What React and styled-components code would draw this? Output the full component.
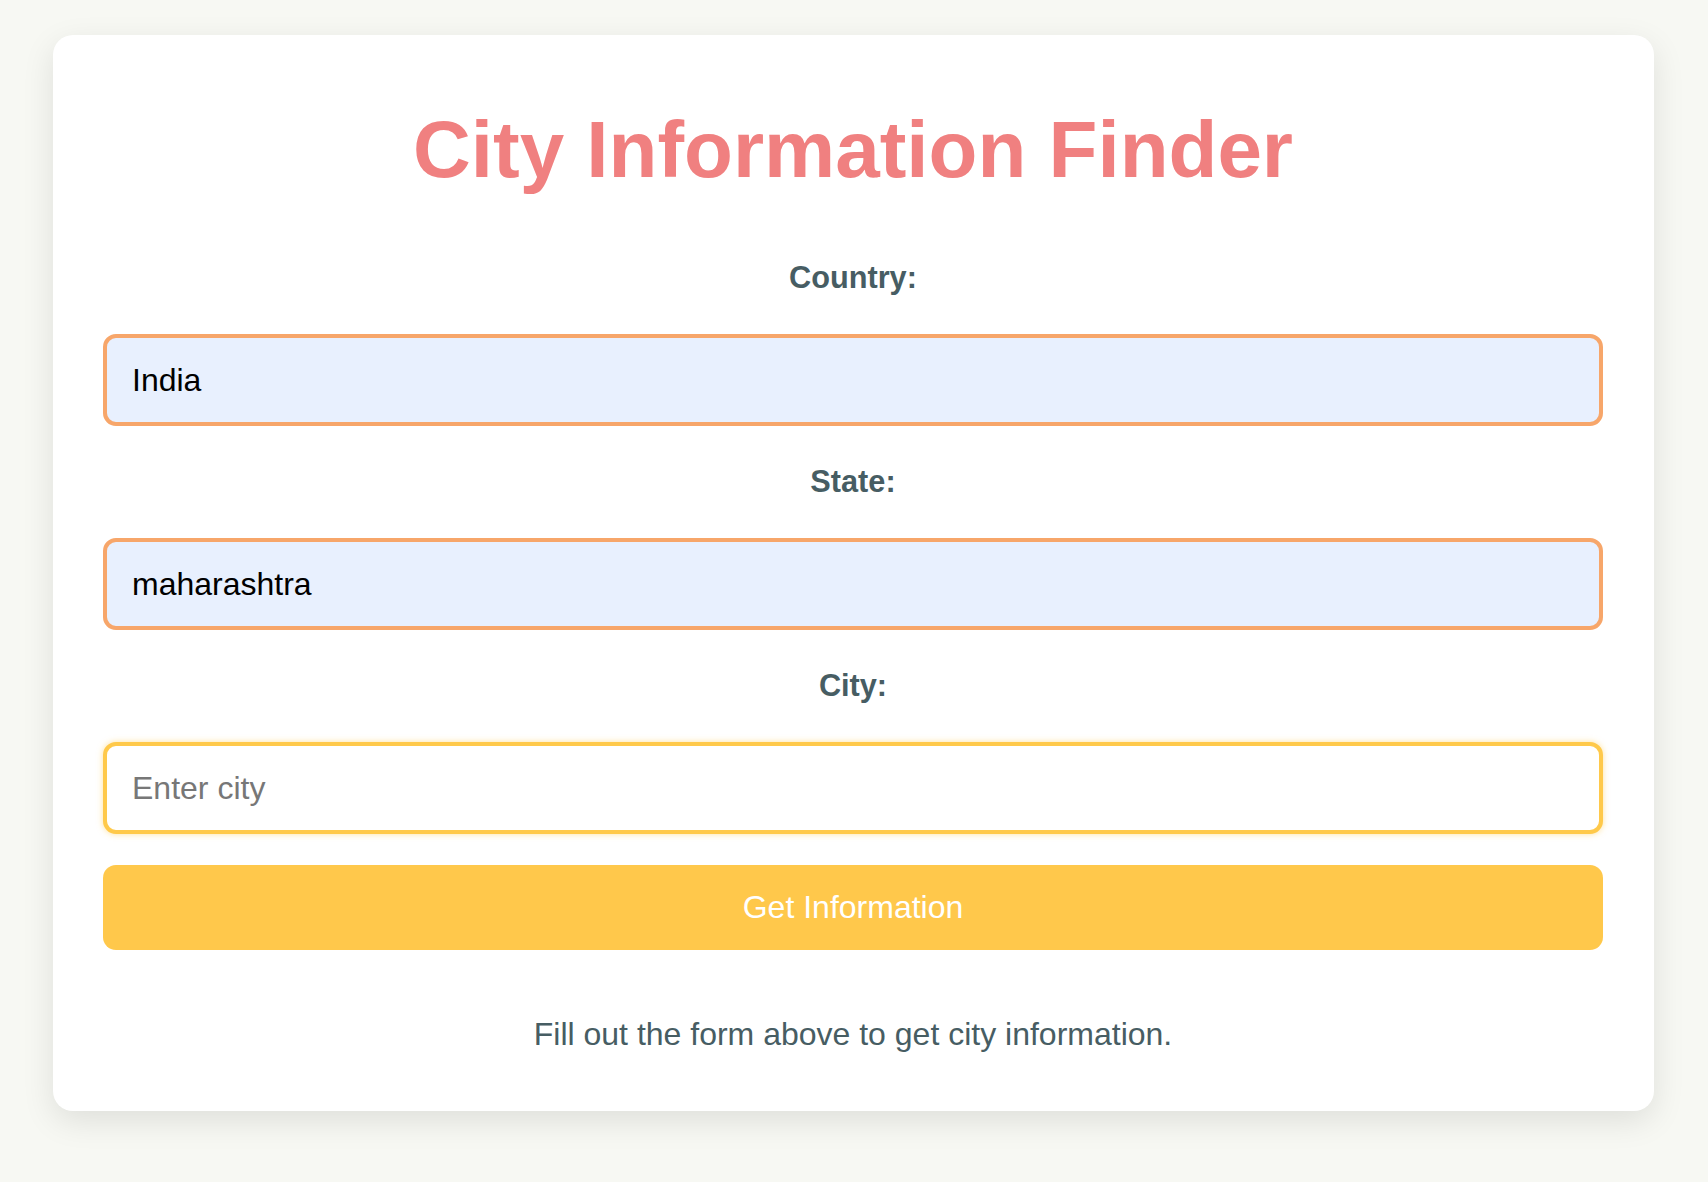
import React, { useState, useRef, useEffect } from "react";
import styled, { createGlobalStyle } from "styled-components";

const GlobalStyle = createGlobalStyle`
  html, body {
    margin: 0;
    padding: 0;
    background: #f7f8f3;
    font-family: "Liberation Sans", Arial, sans-serif;
  }
  * { box-sizing: border-box; }
`;

const Page = styled.div`
  padding: 35px 54px 70px 53px;
`;

const Card = styled.main`
  background: #ffffff;
  border-radius: 20px;
  box-shadow: 0 10px 32px rgba(0, 0, 0, 0.1);
  padding: 69px 51px 58px 50px;
  display: flex;
  flex-direction: column;
`;

const Title = styled.h1`
  margin: 0 0 64px;
  text-align: center;
  font-size: 80px;
  font-weight: 700;
  line-height: 92px;
  color: #f08080;
`;

const Label = styled.label`
  display: block;
  text-align: center;
  font-size: 30.7px;
  font-weight: 700;
  line-height: 35px;
  color: #475d63;
  margin: 0 0 39px;
`;

const Input = styled.input`
  display: block;
  width: 100%;
  height: 92px;
  padding: 0 25px;
  font-family: "Liberation Sans", Arial, sans-serif;
  font-size: 32px;
  color: #000;
  border: 4px solid ${(p) => (p.$focused ? "#ffc94a" : "#f7a66a")};
  border-radius: 13px;
  background: ${(p) => (p.$filled ? "#e8f0fe" : "#ffffff")};
  margin: 0 0 ${(p) => p.$gap}px;
  outline: none;
  box-shadow: ${(p) => (p.$focused ? "0 0 6px rgba(255, 201, 74, 0.55)" : "none")};
  &::placeholder {
    color: #777777;
  }
`;

const Button = styled.button`
  display: block;
  width: 100%;
  height: 85px;
  border: none;
  border-radius: 13px;
  background: #ffc84b;
  color: #ffffff;
  font-family: "Liberation Sans", Arial, sans-serif;
  font-size: 32px;
  cursor: pointer;
  margin: 0 0 66px;
`;

const Note = styled.p`
  margin: 0;
  text-align: center;
  font-size: 32px;
  line-height: 37px;
  color: #475d63;
`;

export default function App() {
  const [country, setCountry] = useState("India");
  const [state, setState] = useState("maharashtra");
  const [city, setCity] = useState("");
  const cityRef = useRef(null);

  useEffect(() => {
    if (cityRef.current) cityRef.current.focus();
  }, []);

  return (
    <>
      <GlobalStyle />
      <Page>
        <Card>
          <Title>City Information Finder</Title>
          <Label htmlFor="country">Country:</Label>
          <Input
            id="country"
            value={country}
            onChange={(e) => setCountry(e.target.value)}
            $filled
            $gap={38}
          />
          <Label htmlFor="state">State:</Label>
          <Input
            id="state"
            value={state}
            onChange={(e) => setState(e.target.value)}
            $filled
            $gap={38}
          />
          <Label htmlFor="city">City:</Label>
          <Input
            id="city"
            ref={cityRef}
            placeholder="Enter city"
            value={city}
            onChange={(e) => setCity(e.target.value)}
            $focused
            $gap={31}
          />
          <Button type="button">Get Information</Button>
          <Note>Fill out the form above to get city information.</Note>
        </Card>
      </Page>
    </>
  );
}
